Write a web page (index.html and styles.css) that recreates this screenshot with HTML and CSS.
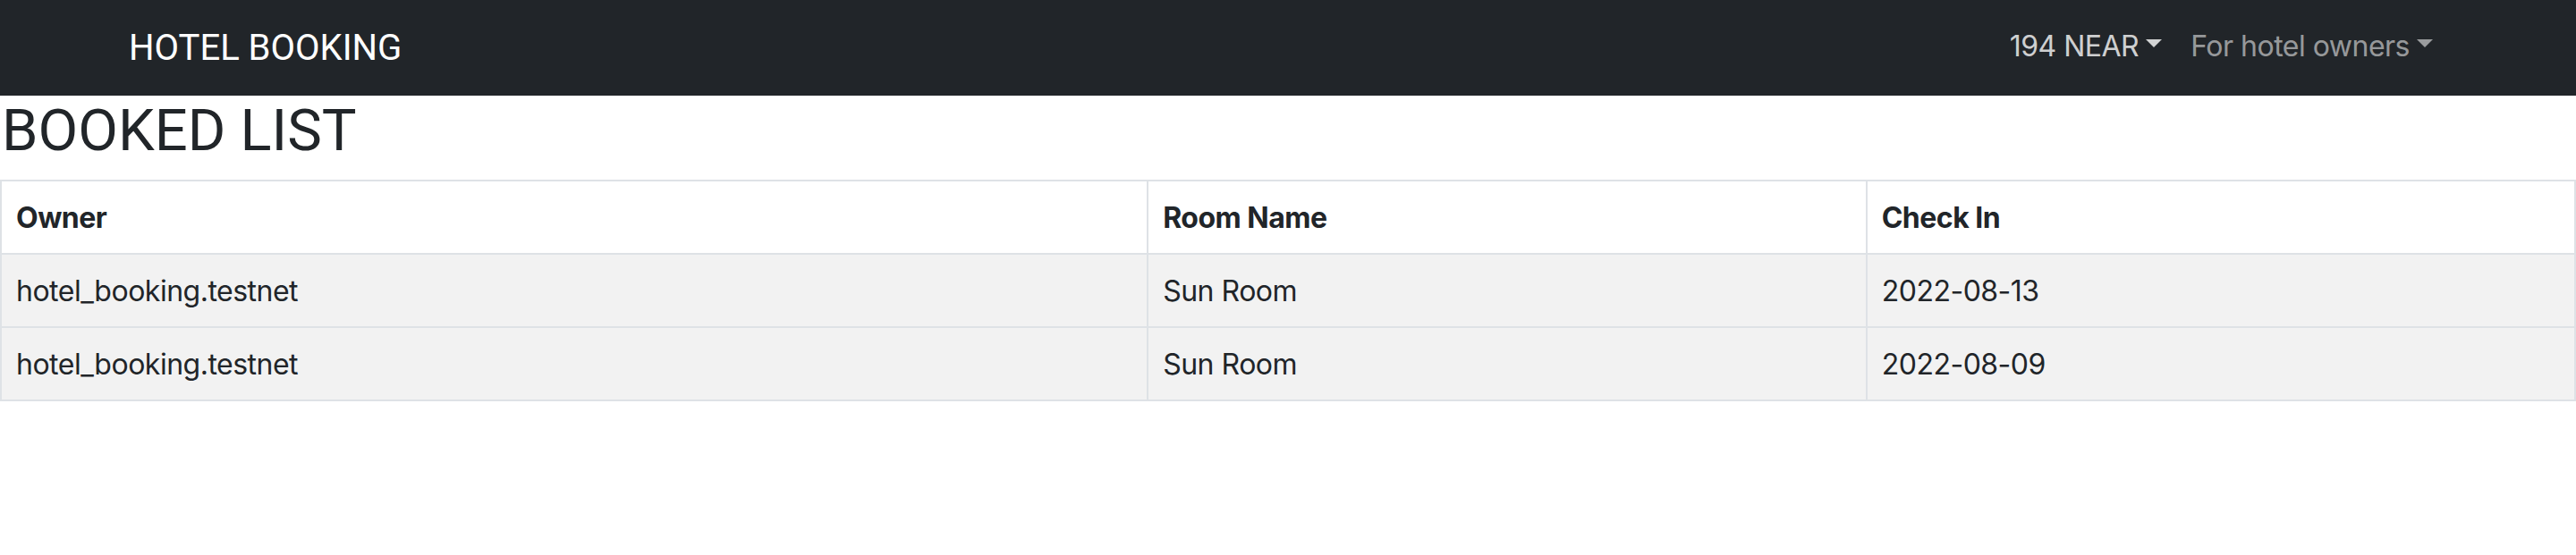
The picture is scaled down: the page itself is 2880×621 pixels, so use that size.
FILE: index.html
```html
<!DOCTYPE html>
<html lang="en">
<head>
<meta charset="utf-8">
<title>Hotel Booking</title>
<link rel="stylesheet" href="styles.css">
</head>
<body>
<nav class="navbar">
  <div class="navbar-inner">
    <a class="brand" href="#">HOTEL BOOKING</a>
    <ul class="nav">
      <li><a class="nav-link active" href="#">194 NEAR<span class="caret"></span></a></li>
      <li><a class="nav-link" href="#">For hotel owners<span class="caret"></span></a></li>
    </ul>
  </div>
</nav>
<h1 class="title">BOOKED LIST</h1>
<table class="booked">
  <colgroup>
    <col class="col-owner">
    <col class="col-room">
    <col class="col-check">
  </colgroup>
  <thead>
    <tr><th>Owner</th><th>Room Name</th><th>Check In</th></tr>
  </thead>
  <tbody>
    <tr><td>hotel_booking.testnet</td><td>Sun Room</td><td>2022-08-13</td></tr>
    <tr><td>hotel_booking.testnet</td><td>Sun Room</td><td>2022-08-09</td></tr>
  </tbody>
</table>
</body>
</html>
```

FILE: styles.css
```css
* { box-sizing: border-box; }

html, body {
  margin: 0;
  padding: 0;
  background: #ffffff;
}

body {
  font-family: Inter, "Noto Sans", "Liberation Sans", sans-serif;
  font-size: 32px;
  line-height: 1.5;
  letter-spacing: -0.5px;
  color: #212529;
}

.navbar {
  background: #212529;
  height: 107px;
  display: flex;
  align-items: center;
}

.navbar-inner {
  width: 100%;
  max-width: 2640px;
  margin: 0 auto;
  padding: 0 24px;
  display: flex;
  align-items: center;
  justify-content: space-between;
}

.brand {
  font-family: Roboto, "Liberation Sans", Arial, sans-serif;
  font-size: 40px;
  line-height: 47px;
  letter-spacing: 0;
  color: #ffffff;
  text-decoration: none;
  padding-left: 0;
}

.nav {
  list-style: none;
  margin: 0;
  padding: 0;
  display: flex;
}

.nav-link {
  display: flex;
  align-items: center;
  padding: 14px 16px 18px;
  line-height: 48px;
  font-size: 32px;
  color: rgba(255, 255, 255, 0.55);
  text-decoration: none;
}

.nav-link.active {
  color: rgba(255, 255, 255, 0.8);
}

.caret {
  display: inline-block;
  margin-left: 8px;
  width: 0;
  height: 0;
  border-top: 9px solid currentColor;
  border-left: 9.5px solid transparent;
  border-right: 9.5px solid transparent;
  position: relative;
  top: -3px;
}

.title {
  font-family: Roboto, "Liberation Sans", Arial, sans-serif;
  font-weight: 400;
  font-size: 65px;
  line-height: 78px;
  letter-spacing: 0;
  margin: 0 0 16px 0;
  padding-left: 2px;
  color: #212529;
}

.booked {
  width: 100%;
  border-collapse: collapse;
  table-layout: fixed;
  border: 2px solid #dee2e6;
}

.col-owner { width: 44.55%; }
.col-room { width: 27.92%; }
.col-check { width: 27.53%; }

.booked th,
.booked td {
  border: 2px solid #dee2e6;
  padding: 17px 16px 15px;
  text-align: left;
  vertical-align: top;
  line-height: 48px;
  font-size: 32px;
}

.booked th {
  font-weight: 700;
  background: #ffffff;
}

.booked tbody tr {
  background: #f2f2f2;
}
```
